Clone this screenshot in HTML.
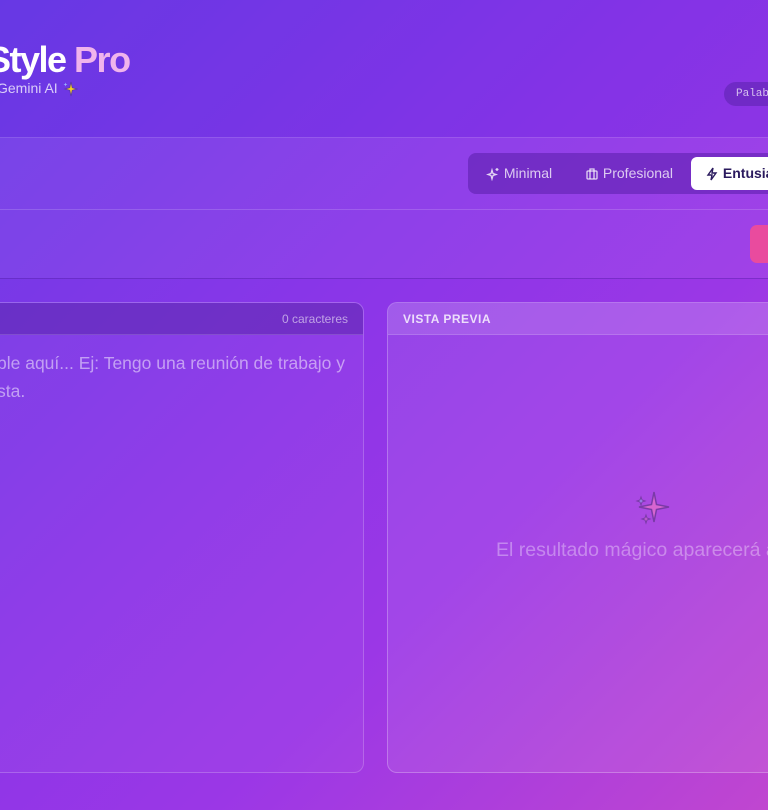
<!DOCTYPE html>
<html><head><meta charset="utf-8"><style>
*{box-sizing:border-box;margin:0;padding:0}
body{width:768px;height:810px;overflow:hidden;font-family:"Liberation Sans",sans-serif;
background:linear-gradient(135deg,#6a3be6 0%,#8a36e8 40%,#9b37e6 65%,#c046d0 100%);position:relative;color:#fff}
.a{position:absolute}
.line{left:0;width:768px;height:1px;background:rgba(255,255,255,.16)}
svg{vertical-align:middle}
</style></head><body>
<div class="a" style="left:0;top:0;width:768px;height:137px;background:rgba(90,40,220,.15)"></div>
<div class="a" style="left:-13px;top:39px;font-size:36px;font-weight:bold;letter-spacing:-1.5px;white-space:nowrap">Style <span style="color:#f0b4ec">Pro</span></div>
<div class="a" style="left:-3px;top:80px;font-size:14px;color:rgba(255,255,255,.75);white-space:nowrap">Gemini AI <svg width="16" height="16" viewBox="0 0 16 16"><path d="M9 1 L10.3 6.7 L15 8 L10.3 9.3 L9 15 L7.7 9.3 L3 8 L7.7 6.7Z" fill="#f5d020" stroke="#5a3aa0" stroke-width=".8"/><path d="M3.5 1.5 L4 3 L5.5 3.5 L4 4 L3.5 5.5 L3 4 L1.5 3.5 L3 3Z" fill="#9ab0ff"/></svg></div>
<div class="a" style="left:724px;top:82px;width:70px;height:24px;border-radius:12px;background:rgba(80,30,160,.45);font-family:'Liberation Mono',monospace;font-size:11px;color:rgba(255,255,255,.7);padding:6px 12px">Palabras</div>
<div class="a line" style="top:137px"></div>
<div class="a" style="left:0;top:138px;width:768px;height:72px;background:rgba(255,255,255,.05)"></div>
<div class="a" style="left:468px;top:153px;width:320px;height:41px;border-radius:8px;background:rgba(90,30,170,.55)"></div>
<div class="a" style="left:486px;top:165px;font-size:14px;color:rgba(255,255,255,.75);white-space:nowrap"><svg width="14" height="14" viewBox="0 0 14 14" fill="none" stroke="rgba(255,255,255,.8)" stroke-width="1.3"><path d="M6 3 L7 6.5 L10 7.5 L7 8.5 L6 12 L5 8.5 L2 7.5 L5 6.5Z"/><path d="M11 1v3M9.5 2.5h3"/></svg> Minimal</div>
<div class="a" style="left:585px;top:165px;font-size:14px;color:rgba(255,255,255,.75);white-space:nowrap"><svg width="14" height="14" viewBox="0 0 14 14" fill="none" stroke="rgba(255,255,255,.8)" stroke-width="1.3"><rect x="2" y="4" width="10" height="8" rx="1"/><path d="M5 4V2h4v2M5 4v8M9 4v8"/></svg> Profesional</div>
<div class="a" style="left:691px;top:157px;width:100px;height:33px;border-radius:6px;background:#fff;font-size:14px;font-weight:bold;color:#2a1a5e;padding:8px 14px;white-space:nowrap"><svg width="14" height="14" viewBox="0 0 14 14" fill="none" stroke="#2a1a5e" stroke-width="1.4"><path d="M8 1 L3 8 H7 L6 13 L11 6 H7Z"/></svg> Entusiasta</div>
<div class="a line" style="top:209px"></div>
<div class="a" style="left:0;top:210px;width:768px;height:68px;background:rgba(255,255,255,.05)"></div>
<div class="a" style="left:750px;top:225px;width:40px;height:38px;border-radius:7px;background:#e94b9e"></div>
<div class="a line" style="top:278px;background:rgba(80,30,160,.4)"></div>
<div class="a" style="left:-10px;top:302px;width:374px;height:471px;border-radius:10px;border:1px solid rgba(255,255,255,.2);background:rgba(255,255,255,.04);overflow:hidden">
<div style="height:32px;background:rgba(80,30,160,.45);border-bottom:1px solid rgba(255,255,255,.15)"></div>
<div class="a" style="right:15px;top:9px;font-size:12px;color:rgba(255,255,255,.55)">0 caracteres</div>
<div class="a" style="left:6px;top:46px;font-size:17.5px;line-height:28px;color:rgba(255,255,255,.5);width:370px;white-space:nowrap">ble aquí... Ej: Tengo una reunión de trabajo y<br>sta.</div>
</div>
<div class="a" style="left:387px;top:302px;width:400px;height:471px;border-radius:10px;border:1px solid rgba(255,255,255,.25);background:rgba(255,255,255,.08);overflow:hidden">
<div style="height:32px;background:rgba(255,255,255,.12);border-bottom:1px solid rgba(255,255,255,.15);font-size:12px;font-weight:bold;letter-spacing:.5px;color:rgba(255,255,255,.8);padding:9px 15px">VISTA PREVIA</div>
<svg class="a" style="left:244px;top:186px" width="42" height="42" viewBox="0 0 42 42"><path d="M22 3 L24.5 15.5 L37 18 L24.5 20.5 L22 33 L19.5 20.5 L7 18 L19.5 15.5Z" fill="#d765d0" stroke="#7a3aa8" stroke-width="1.5"/><path d="M9 8 L10 11 L13 12 L10 13 L9 16 L8 13 L5 12 L8 11Z" fill="#9a8af0" stroke="#7a3aa8"/><path d="M14 26 L15 29 L18 30 L15 31 L14 34 L13 31 L10 30 L13 29Z" fill="#c765d0" stroke="#7a3aa8"/></svg>
<div class="a" style="left:108px;top:236px;font-size:19.5px;color:rgba(255,255,255,.35);white-space:nowrap">El resultado mágico aparecerá aquí</div>
</div>
</body></html>
